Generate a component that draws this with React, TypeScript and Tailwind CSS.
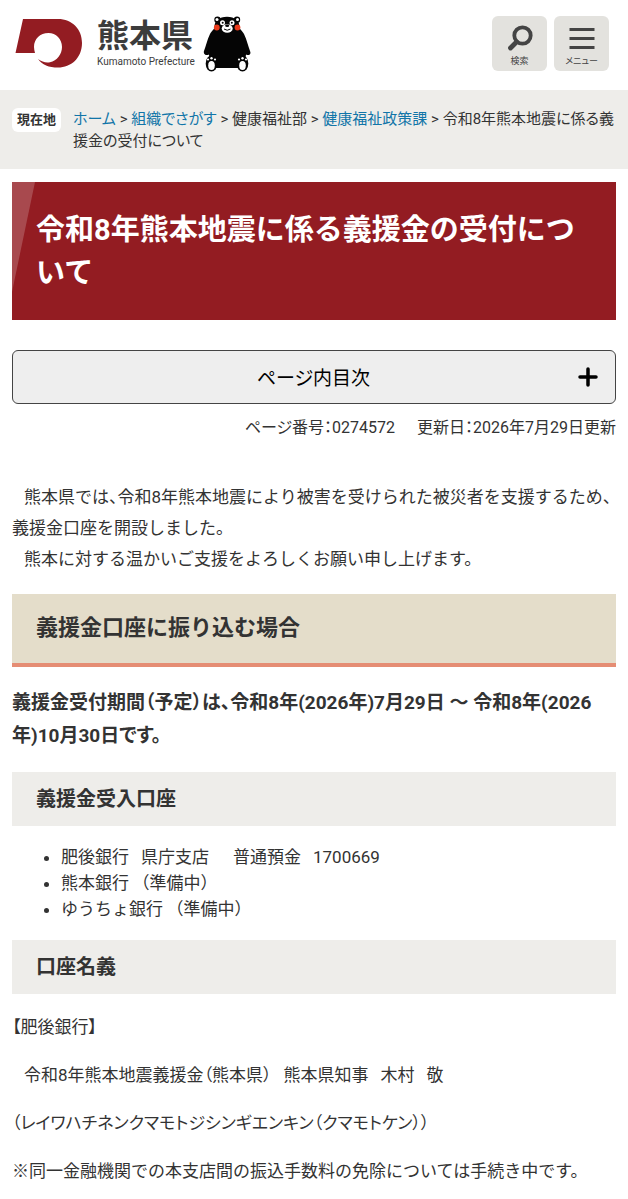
import type { ReactNode } from "react";

function PrefectureMark() {
  return (
    <svg viewBox="0 0 68 50" className="h-[50px] w-[68px]" aria-hidden="true">
      <path
        d="M8 1H43C57 1 67 11 67 25C67 40 56 49.500 43 49.500C34 49.500 27 47 23 41C27 44 31 45 35 44.200C42 43 47 36 47 29C47 21 41 15 33.500 15C25 15 19 21 19 29C19 31 19.500 33 20 35H0.500Z"
        fill="#931c22"
      />
    </svg>
  );
}

function BearMascot() {
  return (
    <svg viewBox="0 0 48 56" className="h-[56px] w-[48px]" aria-hidden="true">
      <g fill="#050505">
        <circle cx="14.500" cy="3.800" r="3.200" />
        <circle cx="34" cy="3.800" r="3.200" />
        <path d="M24 0.800C32 0.800 36.500 5 36.500 11C36.500 13 39 14.500 41 18C44 24 45 30 47 35C48.500 38 46 40 43 38.500C42.500 44 41 48 38 52H11C7 48 6.500 44 6 38.500C3 40 0 38 1 35C3 30 4 24 7 18C9 14.500 11.500 13 11.500 11C11.500 5 16 0.800 24 0.800Z" />
        <ellipse cx="8.500" cy="47.500" rx="5.800" ry="8" />
        <ellipse cx="39.500" cy="47.500" rx="5.800" ry="8" />
      </g>
      <g fill="#fff">
        <circle cx="14" cy="3.400" r="1.500" />
        <circle cx="34.500" cy="3.400" r="1.500" />
        <circle cx="19.500" cy="6.800" r="2.500" />
        <circle cx="29" cy="6.800" r="2.500" />
        <ellipse cx="24.200" cy="12.500" rx="5.500" ry="4.300" />
        <ellipse cx="8.500" cy="49.500" rx="3.300" ry="4.500" />
        <ellipse cx="39.500" cy="49.500" rx="3.300" ry="4.500" />
        <circle cx="5" cy="43.500" r="1.100" />
        <circle cx="8.500" cy="42.300" r="1.200" />
        <circle cx="12" cy="43.500" r="1.100" />
        <circle cx="36" cy="43.500" r="1.100" />
        <circle cx="39.500" cy="42.300" r="1.200" />
        <circle cx="43" cy="43.500" r="1.100" />
      </g>
      <circle cx="19.700" cy="6.800" r="1" fill="#050505" />
      <circle cx="28.800" cy="6.800" r="1" fill="#050505" />
      <ellipse cx="24.200" cy="9.800" rx="2" ry="1.200" fill="#050505" />
      <path d="M21 13Q24.200 15.500 27.500 13" fill="none" stroke="#050505" strokeWidth="1" />
      <circle cx="13.800" cy="11.500" r="2.900" fill="#ea3b1c" />
      <circle cx="34.500" cy="11.500" r="2.900" fill="#ea3b1c" />
    </svg>
  );
}

function HeaderButton({ label, children }: { label: string; children: ReactNode }) {
  return (
    <button
      type="button"
      className="flex h-[55px] w-[55px] flex-col items-center justify-end rounded-md bg-[#e3e2de] pb-1 text-[#444]"
    >
      {children}
      <span className="text-[9px] leading-3">{label}</span>
    </button>
  );
}

function SubHeading({ children }: { children: ReactNode }) {
  return (
    <h3 className="bg-[#eeedea] px-6 py-3 text-[20px] leading-[30px] font-bold">{children}</h3>
  );
}

export default function App() {
  return (
    <div className="min-h-screen overflow-x-hidden bg-white font-[Roboto,'Noto_Sans_CJK_JP',sans-serif] text-[17px] text-[#333] [font-feature-settings:'palt']" lang="ja">
      <header className="flex h-[90px] items-start justify-between pt-4 pr-[19px] pl-[15px]">
        <a href="#" className="flex items-start" aria-label="熊本県">
          <span className="pt-0.5">
            <PrefectureMark />
          </span>
          <span className="flex flex-col pl-3.5">
            <span className="text-[32px] leading-10 font-bold text-[#3c3c3c]">熊本県</span>
            <span className="text-[10px] leading-3 text-[#3c3c3c]">Kumamoto Prefecture</span>
          </span>
          <span className="pl-2">
            <BearMascot />
          </span>
        </a>
        <div className="flex gap-[7px]">
          <HeaderButton label="検索">
            <svg viewBox="0 0 28 28" className="mb-0.5 h-7 w-7" fill="none" stroke="#444" aria-hidden="true">
              <circle cx="16.500" cy="10.500" r="8.200" strokeWidth="3.800" />
              <path d="M10.500 17L4.500 23" strokeWidth="4.800" strokeLinecap="round" />
            </svg>
          </HeaderButton>
          <HeaderButton label="メニュー">
            <svg viewBox="0 0 26 28" className="mb-0.5 h-7 w-[26px]" stroke="#444" strokeWidth="3" aria-hidden="true">
              <path d="M0.500 4.500H25.500M0.500 13.500H25.500M0.500 22.500H25.500" />
            </svg>
          </HeaderButton>
        </div>
      </header>

      <nav aria-label="現在地" className="flex items-start gap-3 bg-[#eeedea] px-3 pt-[18px] pb-[17px]">
        <span className="shrink-0 rounded-md bg-white px-[5px] text-[13px] leading-6 font-bold">現在地</span>
        <p className="text-[15px] leading-[22px]">
          <a href="#" className="text-[#1175a8]">ホーム</a> &gt;{" "}
          <a href="#" className="text-[#1175a8]">組織でさがす</a> &gt; 健康福祉部 &gt;{" "}
          <a href="#" className="text-[#1175a8]">健康福祉政策課</a> &gt; 令和8年熊本地震に係る義援金の受付について
        </p>
      </nav>

      <main className="px-3 pt-[13px] pb-3">
        <h1 className="relative bg-[#931c22] px-6 pt-[27px] pb-[25px] text-[29px] leading-[43px] font-bold text-white [font-feature-settings:'halt']">
          <svg viewBox="0 0 23 110" className="absolute top-0 left-0 h-[110px] w-[23px]" aria-hidden="true">
            <path d="M0 0H23L0 110Z" fill="#fff" fillOpacity="0.2" />
          </svg>
          令和8年熊本地震に係る義援金の受付について
        </h1>

        <button
          type="button"
          className="mt-[30px] flex h-[54px] w-full items-center rounded-md border border-[#444] bg-[#eee] pr-[17px] pl-9 text-[19px] text-black"
        >
          <span className="flex-1 pt-1">ページ内目次</span>
          <svg viewBox="0 0 20 20" className="h-5 w-5" stroke="#000" strokeWidth="3.500" strokeLinecap="round" aria-hidden="true">
            <path d="M10 2V18M2 10H18" />
          </svg>
        </button>

        <p className="mt-3 flex justify-end gap-[22px] text-[16px] leading-6">
          <span>ページ番号：0274572</span>
          <span>更新日：2026年7月29日更新</span>
        </p>

        <div className="mt-[42px] leading-[31px] [font-feature-settings:'halt']">
          <p className="indent-3">
            熊本県では、令和8年熊本地震により被害を受けられた被災者を支援するため、義援金口座を開設しました。
          </p>
          <p className="indent-3">熊本に対する温かいご支援をよろしくお願い申し上げます。</p>
        </div>

        <h2 className="mt-[19px] border-b-4 border-[#e58d74] bg-[#e4ddca] px-6 pt-[18px] pb-[19px] text-[22px] leading-8 font-bold [font-feature-settings:'halt']">
          義援金口座に振り込む場合
        </h2>

        <p className="mt-[19px] text-[19px] leading-[33px] font-bold">
          義援金受付期間（予定）は、令和8年(2026年)7月29日 ～ 令和8年(2026年)10月30日です。
        </p>

        <div className="mt-5">
          <SubHeading>義援金受入口座</SubHeading>
        </div>
        <ul className="my-[18px] list-disc pl-[49px] leading-[26px] [font-feature-settings:'halt']">
          <li>
            肥後銀行<span className="ml-3">県庁支店</span>
            <span className="ml-6">普通預金</span>
            <span className="ml-3">1700669</span>
          </li>
          <li>
            熊本銀行<span className="ml-3">（準備中）</span>
          </li>
          <li>
            ゆうちょ銀行<span className="ml-3">（準備中）</span>
          </li>
        </ul>

        <SubHeading>口座名義</SubHeading>
        <div className="mt-[18px] flex flex-col gap-[18px] leading-[30px]">
          <p>【肥後銀行】</p>
          <p className="pl-3">
            令和8年熊本地震義援金（熊本県）
            <span className="ml-3">熊本県知事</span>
            <span className="ml-3">木村</span>
            <span className="ml-3">敬</span>
          </p>
          <p>（レイワハチネンクマモトジシンギエンキン（クマモトケン））</p>
          <p className="[font-feature-settings:'halt']">
            ※同一金融機関での本支店間の振込手数料の免除については手続き中です。
          </p>
        </div>
      </main>
    </div>
  );
}
